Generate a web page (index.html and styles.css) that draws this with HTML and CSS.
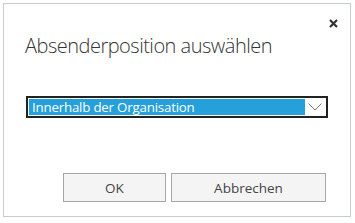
FILE: index.html
```html
<!DOCTYPE html>
<html>
<head>
<meta charset="utf-8">
<link rel="stylesheet" href="styles.css">
</head>
<body>
<div class="dialog">
  <div class="topbar">
    <svg class="close" width="9" height="9" viewBox="0 0 9 9"><path d="M1 1L8 8M8 1L1 8" stroke="#333" stroke-width="2.2"/></svg>
  </div>
  <h1 class="title">Absenderposition auswählen</h1>
  <div class="select">
    <div class="selected">Innerhalb der Organisation</div>
    <div class="arrow"><svg width="14" height="8" viewBox="0 0 14 8"><path d="M0.5 0.5L7 7L13.5 0.5" fill="none" stroke="#777" stroke-width="1"/></svg></div>
  </div>
  <div class="buttons">
    <button class="btn btn-ok">OK</button>
    <button class="btn btn-cancel">Abbrechen</button>
  </div>
</div>
</body>
</html>
```
FILE: styles.css
```css
html, body { margin: 0; padding: 0; background: #fff; }
body { font-family: "Open Sans", "Noto Sans", sans-serif; }
.dialog {
  margin: 3px;
  width: 348px;
  height: 214px;
  box-sizing: border-box;
  border: 1px solid #c6ccd2;
  display: flex;
  flex-direction: column;
  padding: 0 24px 0 21px;
}
.topbar { display: flex; justify-content: flex-end; height: 24px; align-items: flex-end; margin-right: -12px; }
.close { display: block; }
.title {
  margin: 4px 0 0 0;
  font-weight: 300;
  font-size: 20px;
  line-height: 28px;
  color: #333;
  letter-spacing: -0.5px;
}
.select {
  margin-top: 36px;
  margin-left: 1px;
  margin-right: -2px;
  height: 22px;
  box-sizing: border-box;
  border: 2px solid #222;
  padding: 1px;
  display: flex;
}
.selected {
  flex: 1;
  background: #26a0da;
  color: #fff;
  font-size: 13.3px;
  line-height: 16px;
  padding-left: 3px;
  letter-spacing: -0.2px;
}
.arrow { width: 20px; display: flex; align-items: center; justify-content: center; }
.buttons { display: flex; justify-content: flex-end; gap: 5px; margin-top: 55px; }
.btn {
  height: 29px;
  box-sizing: border-box;
  border: 1px solid #a7a7a7;
  background: #f4f4f4;
  color: #444;
  font-family: "Open Sans", "Noto Sans", sans-serif;
  font-size: 13.5px;
  padding: 0;
}
.btn-ok { width: 103px; }
.btn-cancel { width: 155px; }
```
